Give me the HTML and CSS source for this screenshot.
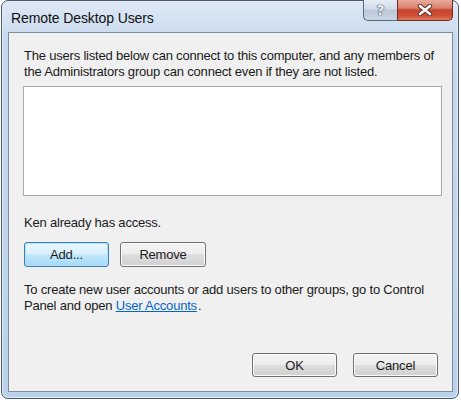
FILE: index.html
```html
<!DOCTYPE html>
<html>
<head>
<meta charset="utf-8">
<link rel="stylesheet" href="styles.css">
</head>
<body>
<div class="window">
  <div class="titlebar">
    <div class="title">Remote Desktop Users</div>
    <div class="caption-buttons">
      <div class="cap-btn help">
        <span class="help-glyph">?</span>
      </div>
      <div class="cap-btn close">
        <svg width="20" height="12" viewBox="0 0 20 12">
          <path d="M5 2 L15 10 M15 2 L5 10" stroke="#5a2a22" stroke-width="4.4" stroke-linecap="round" fill="none"/>
          <path d="M5 2 L15 10 M15 2 L5 10" stroke="#ffffff" stroke-width="2.6" stroke-linecap="round" fill="none"/>
        </svg>
      </div>
    </div>
  </div>
  <div class="panel">
    <p class="text intro">The users listed below can connect to this computer, and any members of the Administrators group can connect even if they are not listed.</p>
    <div class="listbox"></div>
    <p class="text status">Ken already has access.</p>
    <div class="row">
      <button class="btn default add">Add...</button>
      <button class="btn remove">Remove</button>
    </div>
    <p class="text info">To create new user accounts or add users to other groups, go to Control Panel and open <a class="link" href="#">User Accounts</a>.</p>
    <div class="row footer">
      <button class="btn ok">OK</button>
      <button class="btn cancel">Cancel</button>
    </div>
  </div>
</div>
</body>
</html>
```
FILE: styles.css
```css
html, body {
  margin: 0;
  padding: 0;
  background: #ffffff;
}
body {
  width: 461px;
  height: 400px;
  overflow: hidden;
  font-family: "Liberation Sans", Arial, sans-serif;
}
.window {
  box-sizing: border-box;
  margin-left: 1px;
  width: 458px;
  height: 399px;
  border: 1px solid #4a5866;
  border-radius: 7px;
  background: linear-gradient(180deg, #dfe9f5 0px, #d3e1f1 20px, #c6d8ee 40px, #bbd2ec 100%);
  box-shadow: inset 0 0 0 1px #e4eef9;
  padding: 0 5px 6px 6px;
  display: flex;
  flex-direction: column;
}
.titlebar {
  height: 31px;
  display: flex;
  flex-direction: row;
  align-items: flex-start;
}
.title {
  margin-top: 9px;
  padding-left: 3px;
  font-size: 14px;
  letter-spacing: -0.1px;
  color: #111111;
  line-height: 17px;
}
.caption-buttons {
  margin-left: auto;
  display: flex;
  margin-right: 0px;
  margin-top: -1px;
}
.cap-btn {
  box-sizing: border-box;
  height: 21px;
  border: 1px solid #5b6b7c;
  border-top: none;
  display: flex;
  align-items: center;
  justify-content: center;
}
.help {
  width: 34px;
  border-radius: 0 0 0 5px;
  border-right: none;
  background: linear-gradient(180deg, #e6edf5 0%, #d2dce8 45%, #bcc9d8 50%, #c9d5e3 100%);
}
.help-glyph {
  font-family: "DejaVu Sans", sans-serif;
  font-weight: bold;
  font-size: 14px;
  color: #eef1f5;
  text-shadow: 0 0 1px #3d4d60, 0 0 1px #3d4d60, 0 0 1px #3d4d60;
}
.close {
  width: 56px;
  border-radius: 0 0 5px 0;
  border-color: #6e2a20;
  background: linear-gradient(180deg, #e9a99b 0%, #d98270 40%, #c4432c 50%, #d05138 80%, #de7a60 100%);
}
.panel {
  box-sizing: border-box;
  flex: 1;
  border: 1px solid #7f8e9f;
  background: #f0f0f0;
  padding: 15px 14px 14px 14px;
  display: flex;
  flex-direction: column;
}
.text {
  margin: 0;
  font-size: 13px;
  letter-spacing: -0.2px;
  line-height: 16px;
  color: #1a1a1a;
  padding-left: 1px;
}
.listbox {
  box-sizing: border-box;
  margin-top: 6px;
  width: 419px;
  height: 110px;
  background: #ffffff;
  border: 1px solid #a9a9a9;
}
.status {
  margin-top: 19px;
}
.row {
  display: flex;
  flex-direction: row;
  gap: 11px;
  margin-top: 11px;
  padding-left: 1px;
}
.info {
  margin-top: 15px;
}
.btn {
  box-sizing: border-box;
  height: 25px;
  width: 86px;
  border: 1px solid #707070;
  border-radius: 3px;
  font-family: "Liberation Sans", Arial, sans-serif;
  font-size: 13px;
  letter-spacing: -0.2px;
  color: #1a1a1a;
  padding: 0;
  background: linear-gradient(180deg, #f4f4f4 0%, #ececec 48%, #dddddd 52%, #d0d0d0 100%);
  box-shadow: inset 0 0 0 1px #fbfbfb;
}
.btn.default {
  width: 85px;
  border-color: #3c7fb1;
  background: linear-gradient(180deg, #eaf6fd 0%, #d9f0fc 48%, #bee6fd 52%, #a7d9f5 100%);
  box-shadow: inset 0 0 0 1px #b2e2fb;
}
.link {
  color: #0066cc;
  text-decoration: underline;
  margin-right: 1px;
}
.footer {
  margin-top: auto;
  justify-content: flex-end;
  gap: 16px;
  padding-right: 0;
}
.footer .btn {
  width: 85px;
  height: 24px;
}
```
